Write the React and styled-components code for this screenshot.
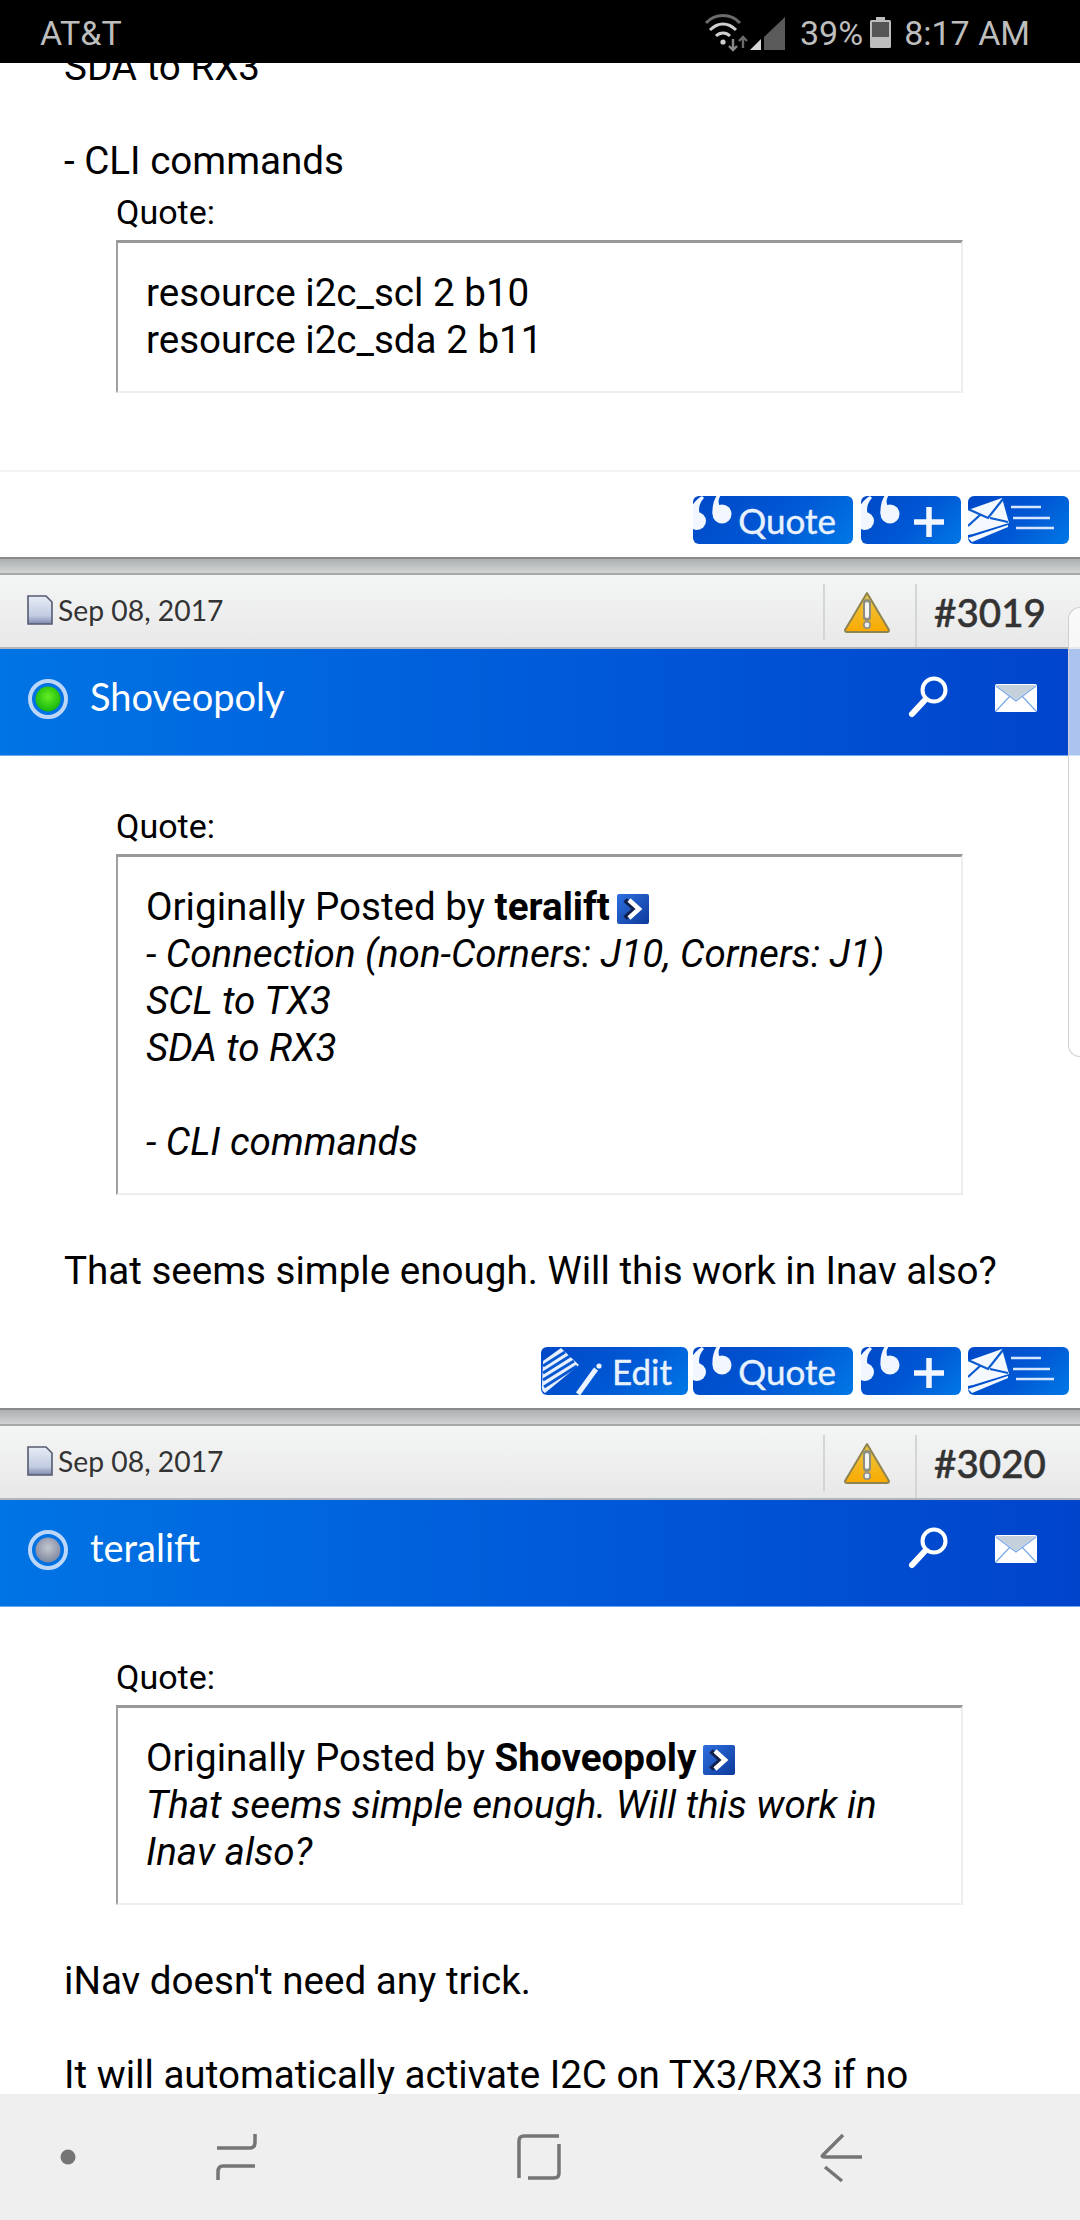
import React from "react";
import styled, { createGlobalStyle } from "styled-components";

const Global = createGlobalStyle`
  html, body { margin: 0; padding: 0; background: #fff; }
  * { box-sizing: border-box; }
`;

const Screen = styled.div`
  position: relative;
  width: 1080px;
  height: 2220px;
  display: flex;
  flex-direction: column;
  overflow: hidden;
  font-family: Roboto, "Liberation Sans", sans-serif;
  color: #000;
`;
const StatusBar = styled.div`
  flex: 0 0 63px;
  background: #000;
  color: #bdbdbd;
  display: flex;
  align-items: center;
  justify-content: space-between;
  padding: 2px 50px 0 40px;
  font-size: 34px;
  z-index: 2;
`;
const StatusRight = styled.div`
  display: flex;
  align-items: center;
`;
const Scroller = styled.div`
  flex: 1;
  min-height: 0;
  overflow: hidden;
`;
const Inner = styled.div`
  margin-top: -20px;
`;
const Message = styled.div`
  padding: ${(p) => p.$top}px 0 0 64px;
  font-size: 38.6px;
  line-height: 47px;
`;
const Line = styled.div`
  min-height: 47px;
`;
const QuoteLabel = styled.div`
  margin: ${(p) => p.$top || 0}px 0 10px 116px;
  font-size: 34px;
  line-height: 36px;
`;
const QuoteBox = styled.div`
  width: 847px;
  margin-left: 116px;
  padding: 26px 28px 28px;
  font-size: 38.6px;
  line-height: 47px;
  border-style: solid;
  border-width: 3px 2px 2px 2px;
  border-color: #999 #eee #eee #a0a0a0;
`;
const Ital = styled.div`
  font-style: italic;
  min-height: 47px;
`;
const Rule = styled.div`
  height: 2px;
  background: #f3f3f3;
  margin-top: 77px;
`;
const Actions = styled.div`
  display: flex;
  justify-content: flex-end;
  padding-right: 11px;
  margin-top: ${(p) => p.$top}px;
`;
const Btn = styled.div`
  position: relative;
  height: 48px;
  width: ${(p) => p.$w}px;
  margin-left: ${(p) => p.$gap}px;
  border-radius: 6px;
  background: linear-gradient(135deg, #0048c8 0%, #0058d4 55%, #0078e6 100%);
  color: #e8f2ff;
  font: 35px Lato, sans-serif;
  -webkit-text-stroke: 0.4px #e8f2ff;
  overflow: hidden;
  display: flex;
  align-items: center;
  justify-content: flex-end;
  padding-right: ${(p) => p.$pr}px;
  svg { position: absolute; left: 0; top: 0; }
`;
const Separator = styled.div`
  height: 18px;
  margin-top: 13px;
  border-top: 2px solid #8a8a8a;
  border-bottom: 2px solid #a8a8a8;
  background: linear-gradient(#acb0b2, #d2d4d4);
`;
const DateBar = styled.div`
  height: 74px;
  display: flex;
  padding-bottom: 2px;
  border-bottom: 2px solid #b2b6ba;
  background: linear-gradient(#f4f5f5, #e8e8e8);
  font-family: Lato, sans-serif;
  color: #333;
`;
const DateCell = styled.div`
  flex: 1;
  display: flex;
  align-items: center;
  padding-left: 27px;
  font-size: 28.3px;
  gap: 5px;
`;
const WarnCell = styled.div`
  width: 92px;
  height: 56px;
  margin-top: 9px;
  padding-right: 6px;
  border-left: 2px solid #d4d6d6;
  display: flex;
  align-items: center;
  justify-content: center;
`;
const NumCell = styled.div`
  width: 165px;
  height: 63px;
  margin-top: 9px;
  padding: 0 0 8px 17px;
  border-left: 2px solid #d4d6d6;
  display: flex;
  align-items: center;
  font-size: 38.6px;
  font-weight: 500;
  -webkit-text-stroke: 0.5px #333;
`;
const UserBar = styled.div`
  height: 107px;
  display: flex;
  align-items: center;
  padding: 0 42px 0 27px;
  border-bottom: 1px solid #6aa8ef;
  background: linear-gradient(90deg, #0074e4 0%, #0060dc 40%, #0044cc 100%);
  color: #fff;
  font: 38px Lato, sans-serif;
`;
const UserName = styled.div`
  flex: 1;
  margin-left: 21px;
  padding-bottom: 12px;
`;
const UserIcons = styled.div`
  display: flex;
  align-items: center;
  gap: 43px;
  padding-bottom: 8px;
`;
const NavBar = styled.div`
  flex: 0 0 126px;
  background: #efefef;
  z-index: 2;
  display: flex;
  svg { display: block; }
`;
const ScrollThumb = styled.div`
  position: absolute;
  right: 0;
  top: 607px;
  width: 12px;
  height: 450px;
  border: 1px solid #cfcfcf;
  border-right: none;
  border-radius: 14px 0 0 14px;
  background: rgba(255, 255, 255, 0.68);
`;
const Chevron = styled.svg`
  vertical-align: -4px;
  margin-left: 7px;
`;

const Marks = () => (
  <>
    <circle cx="4" cy="25" r="9" />
    <path d="M-5 23 C-5 13 2 4 9 0 L11 2 C6 7 5 14 7 19 Z" />
    <circle cx="29" cy="18" r="9.5" />
    <path d="M19.5 18 C19 10 21 4 24 -1 L28 -1 C25 3 25 7 27 10 Z" />
  </>
);
const QuoteIcon = () => (
  <svg width="46" height="48" viewBox="0 0 46 48" fill="#f2f7ff">
    <Marks />
  </svg>
);
const PlusQuote = () => (
  <svg width="100" height="48" viewBox="0 0 100 48" fill="#f2f7ff">
    <Marks />
    <path d="M53 26 H83 M68 11 V41" stroke="#f2f7ff" strokeWidth="5.5" fill="none" />
  </svg>
);
const MailLines = () => (
  <svg width="101" height="48" viewBox="0 0 101 48">
    <path d="M0 14 L34 2 L41 27 L5 38 L0 39 Z" fill="#f4f8ff" />
    <path d="M0 13 L20 22 L35 3 M0 30 L12 19 M22 22 L40 26" stroke="#0a5ad0" strokeWidth="2.2" fill="none" />
    <path d="M0 42 L40 29 L40 31 L4 46 Z" fill="#f4f8ff" />
    <path d="M43 11 H73 M45 22 H82 M48 32 H86" stroke="#d6e6ff" strokeWidth="2.6" fill="none" />
  </svg>
);
const EditIcon = () => (
  <svg width="64" height="48" viewBox="0 0 64 48">
    <path d="M2 14 L20 1 L38 18 L4 46 Q0 44 1 38 Z" fill="#e6f0ff" />
    <path d="M2 19 L24 5 M2 26 L29 9 M2 33 L33 14 M3 40 L36 19" stroke="#0a58d0" strokeWidth="3" fill="none" />
    <path d="M37 47 L55 22" stroke="#eaf3ff" strokeWidth="5" fill="none" />
    <circle cx="58" cy="19" r="2.6" fill="#eaf3ff" />
  </svg>
);
const Warn = () => (
  <svg width="48" height="42" viewBox="0 0 48 42">
    <defs>
      <linearGradient id="wg" x1="0" y1="0" x2="0" y2="1">
        <stop offset="0" stopColor="#e8c84a" />
        <stop offset="1" stopColor="#fbaa00" />
      </linearGradient>
    </defs>
    <path d="M24 2 L46 39 Q46 41 44 41 H4 Q2 41 2 39 Z" fill="url(#wg)" stroke="#8f8450" strokeWidth="2" strokeLinejoin="round" />
    <path d="M24 12 V26" stroke="#8e8e80" strokeWidth="8" strokeLinecap="round" />
    <path d="M24 13 V25" stroke="#f5f5f5" strokeWidth="4" strokeLinecap="round" />
    <circle cx="24" cy="34" r="4" fill="#8e8e80" />
    <circle cx="24" cy="34" r="2.4" fill="#eee" />
  </svg>
);
const DocIcon = () => (
  <svg width="26" height="30" viewBox="0 0 26 30" style={{ flex: "none" }}>
    <defs>
      <linearGradient id="dg" x1="0" y1="0" x2="0" y2="1">
        <stop offset="0" stopColor="#e8edf6" />
        <stop offset="0.7" stopColor="#c2cce2" />
        <stop offset="1" stopColor="#7e88ac" />
      </linearGradient>
    </defs>
    <path d="M1 1 H19 L25 7 V29 H1 Z" fill="url(#dg)" stroke="#555b70" strokeWidth="1.6" />
  </svg>
);
const Dot = ({ c1, c2, id }) => (
  <svg width="42" height="42" viewBox="0 0 42 42" style={{ flex: "none", marginBottom: 6 }}>
    <defs>
      <radialGradient id={id} cx="0.5" cy="0.4" r="0.6">
        <stop offset="0" stopColor={c1} />
        <stop offset="1" stopColor={c2} />
      </radialGradient>
    </defs>
    <circle cx="21" cy="21" r="18" fill="none" stroke="#bcd6fa" strokeWidth="4" />
    <circle cx="21" cy="21" r="12.5" fill={`url(#${id})`} />
  </svg>
);
const Search = () => (
  <svg width="44" height="44" viewBox="0 0 44 44" fill="none" stroke="#fff">
    <circle cx="27" cy="14" r="11.5" strokeWidth="4" />
    <path d="M18 24 L5 38" strokeWidth="6" strokeLinecap="round" />
  </svg>
);
const Mail = () => (
  <svg width="44" height="30" viewBox="0 0 44 30">
    <rect x="1" y="1" width="42" height="28" rx="2" fill="#fff" />
    <path d="M2 2 H42 L22 17 Z" fill="#c4d0dc" />
    <path d="M2 3 L22 18 L42 3 M2 28 L16 13 M42 28 L28 13" stroke="#7aa8e8" strokeWidth="1.2" fill="none" />
  </svg>
);
const Go = ({ id }) => (
  <Chevron width="32" height="30" viewBox="0 0 32 30">
    <defs>
      <linearGradient id={id} x1="0" y1="0" x2="1" y2="1">
        <stop offset="0" stopColor="#2f6fe0" />
        <stop offset="1" stopColor="#0c3a9a" />
      </linearGradient>
    </defs>
    <rect width="32" height="30" rx="2" fill={`url(#${id})`} />
    <path d="M10 6 L20 15 L10 24" stroke="#10204a" strokeWidth="5" fill="none" transform="translate(-2,0)" />
    <path d="M12 6 L22 15 L12 24" stroke="#fff" strokeWidth="4.5" fill="none" />
  </Chevron>
);

const Actionbar = ({ edit, top }) => (
  <Actions $top={top}>
    {edit && (
      <Btn $w={147} $gap={0} $pr={16}>
        <EditIcon />
        Edit
      </Btn>
    )}
    <Btn $w={160} $gap={5} $pr={17}>
      <QuoteIcon />
      Quote
    </Btn>
    <Btn $w={100} $gap={8} $pr={0}>
      <PlusQuote />
    </Btn>
    <Btn $w={101} $gap={7} $pr={0}>
      <MailLines />
    </Btn>
  </Actions>
);

const Header = ({ num, name, c1, c2, id }) => (
  <>
    <Separator />
    <DateBar>
      <DateCell>
        <DocIcon />
        Sep 08, 2017
      </DateCell>
      <WarnCell>
        <Warn />
      </WarnCell>
      <NumCell>{num}</NumCell>
    </DateBar>
    <UserBar>
      <Dot c1={c1} c2={c2} id={id} />
      <UserName>{name}</UserName>
      <UserIcons>
        <Search />
        <Mail />
      </UserIcons>
    </UserBar>
  </>
);

export default function App() {
  return (
    <Screen>
      <Global />
      <StatusBar>
        <span>AT&amp;T</span>
        <StatusRight>
          <svg width="82" height="40" viewBox="0 0 82 40" fill="none" style={{ marginRight: 13 }}>
            <path d="M1 10 C10 0 26 0 35 10" stroke="#6a6a6a" strokeWidth="3" />
            <path d="M5 17 C13 9 23 9 31 17" stroke="#d0d0d0" strokeWidth="3" />
            <path d="M11 23 C15 19 21 19 25 23" stroke="#d0d0d0" strokeWidth="3" />
            <circle cx="18" cy="29" r="2.6" fill="#d0d0d0" />
            <path d="M28 26 V37 M24 33 L28 37 L32 33" stroke="#8a8a8a" strokeWidth="2.4" />
            <path d="M38 35 V24 M34 28 L38 24 L42 28" stroke="#6a6a6a" strokeWidth="2.4" />
            <path d="M45 37 L56 26 V37 Z" fill="#d8d8d8" />
            <path d="M59 37 V24 L80 4 V37 Z" fill="#5a5a5a" />
          </svg>
          <span>39%</span>
          <svg width="21" height="31" viewBox="0 0 21 31" style={{ margin: "0 13px 0 7px" }}>
            <rect x="6" y="0" width="9" height="3" fill="#bdbdbd" />
            <rect x="0" y="3" width="21" height="28" rx="1.5" fill="#bdbdbd" />
            <rect x="2" y="5" width="17" height="15" fill="#555" />
          </svg>
          <span>8:17 AM</span>
        </StatusRight>
      </StatusBar>
      <Scroller>
        <Inner>
          <Message $top={0}>
            <Line>SDA to RX3</Line>
            <Line />
            <Line>- CLI commands</Line>
          </Message>
          <QuoteLabel $top={10}>Quote:</QuoteLabel>
          <QuoteBox>
            <div>resource i2c_scl 2 b10</div>
            <div>resource i2c_sda 2 b11</div>
          </QuoteBox>
          <Rule />
          <Actionbar top={24} />
          <Header num="#3019" name="Shoveopoly" c1="#66ee22" c2="#14b40c" id="on" />

          <QuoteLabel $top={52}>Quote:</QuoteLabel>
          <QuoteBox>
            <div>
              Originally Posted by <b>teralift</b>
              <Go id="go1" />
            </div>
            <Ital>- Connection (non-Corners: J10, Corners: J1)</Ital>
            <Ital>SCL to TX3</Ital>
            <Ital>SDA to RX3</Ital>
            <Ital />
            <Ital>- CLI commands</Ital>
          </QuoteBox>
          <Message $top={52}>
            <Line>That seems simple enough. Will this work in Inav also?</Line>
          </Message>
          <Actionbar edit top={53} />
          <Header num="#3020" name="teralift" c1="#c4c8d0" c2="#8088a0" id="off" />

          <QuoteLabel $top={52}>Quote:</QuoteLabel>
          <QuoteBox>
            <div>
              Originally Posted by <b>Shoveopoly</b>
              <Go id="go2" />
            </div>
            <Ital>That seems simple enough. Will this work in</Ital>
            <Ital>Inav also?</Ital>
          </QuoteBox>
          <Message $top={52}>
            <Line>iNav doesn't need any trick.</Line>
            <Line />
            <Line>It will automatically activate I2C on TX3/RX3 if no</Line>
          </Message>
        </Inner>
      </Scroller>
      <NavBar>
        <svg width="1080" height="126" viewBox="0 0 1080 126" fill="none" stroke="#757575" strokeWidth="3.5">
          <ellipse cx="68" cy="63" rx="7.5" ry="7.5" fill="#757575" stroke="none" />
          <path d="M217 54 H250 Q255 54 255 48 V40" />
          <path d="M255 72 H223 Q218 72 218 78 V86" />
          <path d="M519 84 V47 Q519 42 524 42 H559" />
          <path d="M559 50 V79 Q559 84 554 84 H528" />
          <path d="M843 41 L823 61 Q821 63 825 63 H862" />
          <path d="M825 73 L842 87" />
        </svg>
      </NavBar>
      <ScrollThumb />
    </Screen>
  );
}
